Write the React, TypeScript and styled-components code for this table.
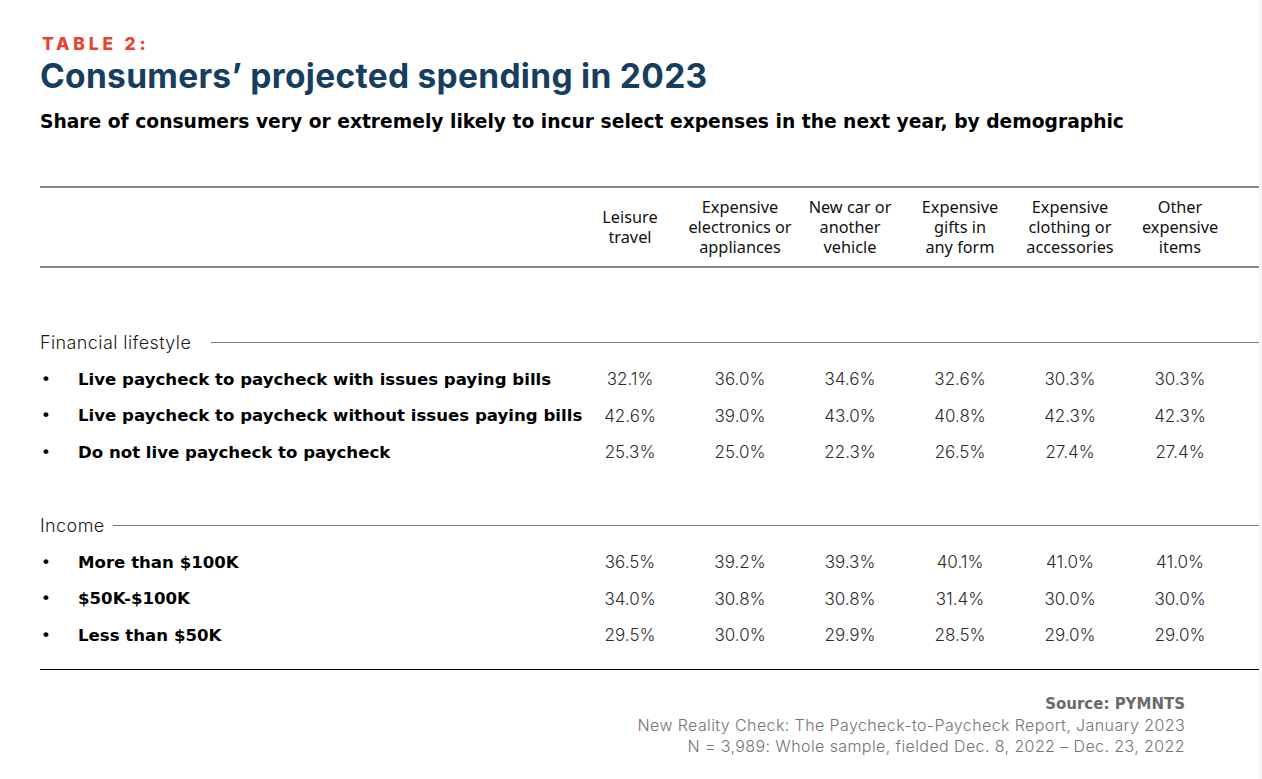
import React from "react";
import styled, { createGlobalStyle } from "styled-components";

const Global = createGlobalStyle`
  html, body { margin: 0; padding: 0; background: #f4f4f4; }
  body { font-family: "Inter", "Liberation Sans", sans-serif; }
`;

const Page = styled.div`
  width: 1259px;
  height: 779px;
  background: #ffffff;
  box-sizing: border-box;
  padding: 31px 0 0 40px;
`;

const Eyebrow = styled.div`
  font-family: "Inter", sans-serif;
  font-weight: 800;
  font-size: 17.5px;
  letter-spacing: 3.8px;
  color: #e8442d;
  padding-left: 2px;
  line-height: 26px;
`;

const Title = styled.h1`
  margin: 0;
  font-family: "Inter", sans-serif;
  font-weight: 700;
  font-size: 33.5px;
  letter-spacing: 0.3px;
  color: #173e5f;
  line-height: 38px;
`;

const Subtitle = styled.h2`
  margin: 15px 0 0;
  font-family: "DejaVu Sans", sans-serif;
  font-weight: 700;
  font-size: 18.7px;
  color: #000;
  line-height: 24px;
  white-space: nowrap;
`;

const Table = styled.div`
  margin-top: 52px;
  display: grid;
  grid-template-columns: 535px repeat(6, 110px) 1fr;
`;

const HeadRow = styled.div`
  grid-column: 1 / -1;
  display: grid;
  grid-template-columns: subgrid;
  border-top: 2px solid #8c8c8c;
  border-bottom: 2px solid #8c8c8c;
  height: 82px;
  box-sizing: border-box;
  align-items: center;
`;

const HeadCell = styled.div`
  font-family: "Noto Sans", "Open Sans", sans-serif;
  font-size: 16.3px;
  line-height: 20px;
  color: #111;
  text-align: center;
  white-space: nowrap;
`;

const Section = styled.div<{ $top: number; $gap: number }>`
  grid-column: 1 / -1;
  display: flex;
  align-items: center;
  gap: ${(p) => p.$gap}px;
  margin-top: ${(p) => p.$top}px;
  height: 37px;
  font-family: "Inter", sans-serif;
  font-weight: 300;
  font-size: 18px;
  letter-spacing: 0.4px;
  color: #1a1a1a;
  &::after {
    content: "";
    flex: 1;
    height: 1px;
    background: #7a7a7a;
  }
`;

const Row = styled.div`
  grid-column: 1 / -1;
  display: grid;
  grid-template-columns: subgrid;
  height: 36.6px;
  align-items: center;
`;

const Label = styled.div`
  display: flex;
  align-items: center;
  font-family: "DejaVu Sans", sans-serif;
  font-weight: 700;
  font-size: 16.6px;
  color: #000;
  white-space: nowrap;
  &::before {
    content: "•";
    flex: 0 0 37px;
    padding-left: 1px;
    font-weight: 400;
  }
`;

const Value = styled.div`
  font-family: "Inter", sans-serif;
  font-weight: 300;
  font-size: 17px;
  color: #2b2b2b;
  text-align: center;
`;

const BottomRule = styled.div`
  grid-column: 1 / -1;
  margin-top: 15px;
  height: 1px;
  background: #000;
`;

const Source = styled.div`
  width: 1145px;
  margin-top: 24px;
  text-align: right;
  font-family: "Inter", sans-serif;
  font-weight: 300;
  font-size: 16px;
  letter-spacing: 0.4px;
  line-height: 21px;
  color: #747474;
`;

const SourceTitle = styled.div`
  font-family: "DejaVu Sans", sans-serif;
  font-weight: 700;
  font-size: 15px;
  letter-spacing: 0;
  color: #6a6a6a;
`;

const headers = [
  ["Leisure", "travel"],
  ["Expensive", "electronics or", "appliances"],
  ["New car or", "another", "vehicle"],
  ["Expensive", "gifts in", "any form"],
  ["Expensive", "clothing or", "accessories"],
  ["Other", "expensive", "items"],
];

const sections = [
  {
    name: "Financial lifestyle",
    top: 56,
    gap: 20,
    rows: [
      ["Live paycheck to paycheck with issues paying bills", "32.1%", "36.0%", "34.6%", "32.6%", "30.3%", "30.3%"],
      ["Live paycheck to paycheck without issues paying bills", "42.6%", "39.0%", "43.0%", "40.8%", "42.3%", "42.3%"],
      ["Do not live paycheck to paycheck", "25.3%", "25.0%", "22.3%", "26.5%", "27.4%", "27.4%"],
    ],
  },
  {
    name: "Income",
    top: 36,
    gap: 8,
    rows: [
      ["More than $100K", "36.5%", "39.2%", "39.3%", "40.1%", "41.0%", "41.0%"],
      ["$50K-$100K", "34.0%", "30.8%", "30.8%", "31.4%", "30.0%", "30.0%"],
      ["Less than $50K", "29.5%", "30.0%", "29.9%", "28.5%", "29.0%", "29.0%"],
    ],
  },
];

export default function App() {
  return (
    <>
      <Global />
      <Page>
        <Eyebrow>TABLE 2:</Eyebrow>
        <Title>Consumers’ projected spending in 2023</Title>
        <Subtitle>
          Share of consumers very or extremely likely to incur select expenses in the next year, by demographic
        </Subtitle>
        <Table>
          <HeadRow>
            <div />
            {headers.map((h, i) => (
              <HeadCell key={i}>
                {h.map((l, j) => (
                  <div key={j}>{l}</div>
                ))}
              </HeadCell>
            ))}
            <div />
          </HeadRow>
          {sections.map((s) => (
            <React.Fragment key={s.name}>
              <Section $top={s.top} $gap={s.gap}>
                {s.name}
              </Section>
              {s.rows.map((r) => (
                <Row key={r[0]}>
                  <Label>{r[0]}</Label>
                  {r.slice(1).map((v, k) => (
                    <Value key={k}>{v}</Value>
                  ))}
                  <div />
                </Row>
              ))}
            </React.Fragment>
          ))}
          <BottomRule />
        </Table>
        <Source>
          <SourceTitle>Source: PYMNTS</SourceTitle>
          <div>New Reality Check: The Paycheck-to-Paycheck Report, January 2023</div>
          <div>N = 3,989: Whole sample, fielded Dec. 8, 2022 – Dec. 23, 2022</div>
        </Source>
      </Page>
    </>
  );
}
